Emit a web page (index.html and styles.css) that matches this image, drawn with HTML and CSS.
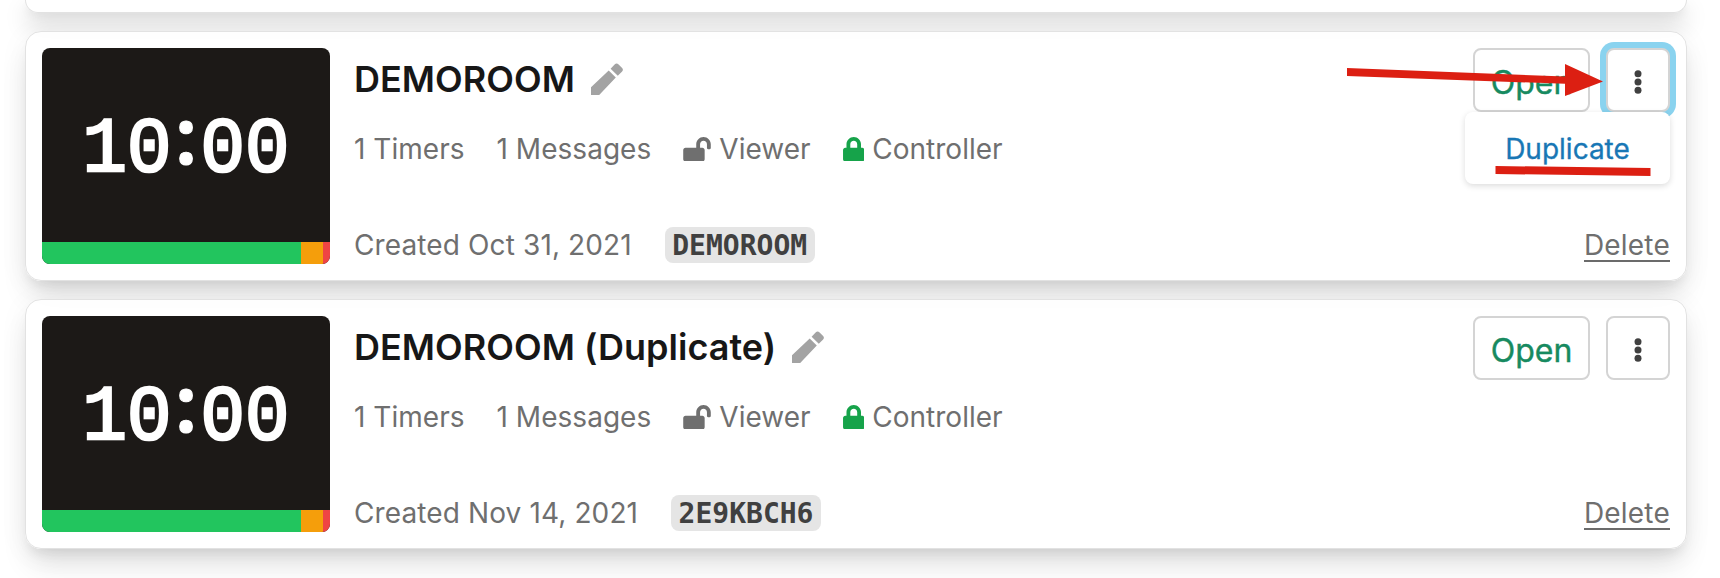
FILE: index.html
```html
<!DOCTYPE html>
<html lang="en">
<head>
<meta charset="utf-8">
<title>Rooms</title>
<link rel="stylesheet" href="styles.css">
</head>
<body>
<svg class="symbols" aria-hidden="true">
  <symbol id="pencil" viewBox="0 0 32 32"><path d="M17.700 7.500l7.100 7.100L8.200 32H0v-7.800zM19.600 5.700l4-4.100q2-2 4 0l3.300 3.200q2 2 0 4l-4.100 4z"/></symbol>
  <symbol id="lock" viewBox="0 0 448 512"><path d="M400 224h-24v-72C376 68.2 307.8 0 224 0S72 68.2 72 152v72H48c-26.5 0-48 21.5-48 48v192c0 26.5 21.5 48 48 48h352c26.5 0 48-21.5 48-48V272c0-26.5-21.5-48-48-48zm-104 0H152v-72c0-39.7 32.3-72 72-72s72 32.3 72 72v72z"/></symbol>
  <symbol id="lock-open" viewBox="0 0 576 512"><path d="M423.5 0C339.5.3 272 69.5 272 153.5V224H48c-26.5 0-48 21.5-48 48v192c0 26.5 21.5 48 48 48h352c26.5 0 48-21.5 48-48V272c0-26.5-21.5-48-48-48h-48v-71.1c0-39.6 31.7-72.5 71.3-72.9 40-.4 72.7 32.1 72.7 72v80c0 13.3 10.7 24 24 24h32c13.3 0 24-10.7 24-24v-80C576 68 507.5-.3 423.5 0z"/></symbol>
  <symbol id="dots" viewBox="0 0 8 24"><circle cx="4" cy="3.7" r="3.5"/><circle cx="4" cy="12" r="3.5"/><circle cx="4" cy="20.3" r="3.5"/></symbol>
</svg>
<main class="rooms">
  <article class="card card-previous"></article>

  <article class="card">
    <div class="preview">
      <div class="time">10<span class="colon">:</span>00</div>
      <div class="progress"><i class="green"></i><i class="orange"></i><i class="red"></i></div>
    </div>
    <div class="info">
      <h2 class="title">DEMOROOM<svg class="icon-pencil"><use href="#pencil"/></svg></h2>
      <div class="meta">
        <span>1 Timers</span><span>1 Messages</span>
        <span class="access"><svg class="icon-open"><use href="#lock-open"/></svg>Viewer</span>
        <span class="access"><svg class="icon-lock"><use href="#lock"/></svg>Controller</span>
      </div>
      <div class="created"><span>Created Oct 31, 2021</span><code class="code">DEMOROOM</code></div>
    </div>
    <div class="side">
      <div class="actions">
        <button class="btn open">Open</button>
        <button class="btn more focused" aria-label="More"><svg class="icon-dots"><use href="#dots"/></svg></button>
        <div class="menu">Duplicate</div>
      </div>
      <a class="delete">Delete</a>
    </div>
  </article>

  <article class="card">
    <div class="preview">
      <div class="time">10<span class="colon">:</span>00</div>
      <div class="progress"><i class="green"></i><i class="orange"></i><i class="red"></i></div>
    </div>
    <div class="info">
      <h2 class="title">DEMOROOM (Duplicate)<svg class="icon-pencil"><use href="#pencil"/></svg></h2>
      <div class="meta">
        <span>1 Timers</span><span>1 Messages</span>
        <span class="access"><svg class="icon-open"><use href="#lock-open"/></svg>Viewer</span>
        <span class="access"><svg class="icon-lock"><use href="#lock"/></svg>Controller</span>
      </div>
      <div class="created"><span>Created Nov 14, 2021</span><code class="code">2E9KBCH6</code></div>
    </div>
    <div class="side">
      <div class="actions">
        <button class="btn open">Open</button>
        <button class="btn more" aria-label="More"><svg class="icon-dots"><use href="#dots"/></svg></button>
      </div>
      <a class="delete">Delete</a>
    </div>
  </article>
</main>
<svg class="annotations" viewBox="0 0 1720 578" aria-hidden="true">
  <path d="M1347 68l218 8.500v-12.500l38 17.500-38 14.500v-12.200l-218-7.800z"/>
  <path d="M1495.500 166l155 2v8l-155-2z"/>
</svg>
</body>
</html>
```
FILE: styles.css
```css
* { box-sizing: border-box; }
body {
  margin: 0;
  height: 578px;
  overflow: hidden;
  background: #fff;
  font-family: Inter, "Liberation Sans", sans-serif;
  font-size: 28px;
  color: #6f6f6f;
}
.symbols { display: none; }
svg { fill: currentColor; }
.rooms {
  display: flex;
  flex-direction: column;
  gap: 18px;
  padding: 0 33px 0 25px;
}
.card {
  display: flex;
  height: 250px;
  padding: 16px;
  border: 1px solid #e2e2e2;
  border-radius: 16px;
  background: rgba(255, 255, 255, .85);
  box-shadow: 0 20px 30px -6px rgba(0, 0, 0, .12), 0 8px 12px -4px rgba(0, 0, 0, .07), 0 4px 30px rgba(0, 0, 0, .05);
}
.card-previous {
  height: 13px;
  padding: 0;
  border-top: 0;
  border-radius: 0 0 16px 16px;
  box-shadow: 0 12px 24px rgba(0, 0, 0, .2), 0 4px 10px -2px rgba(0, 0, 0, .08);
}
.preview {
  display: flex;
  flex-direction: column;
  width: 288px;
  height: 216px;
  border-radius: 8px;
  overflow: hidden;
  background: #1c1917;
}
.time {
  flex: 1;
  display: flex;
  justify-content: center;
  align-items: center;
  padding-top: 9px;
  font: 400 74px/84px "Liberation Mono", monospace;
  color: #fff;
  -webkit-text-stroke: 2.6px #fff;
  transform: scaleY(1.04);
}
.colon {
  margin: 0 4px;
  padding-bottom: 29px;
  font-family: "Open Sans", sans-serif;
  font-weight: 700;
  -webkit-text-stroke-width: 1px;
}
.progress { display: flex; height: 22px; }
.green { flex: 1; background: #22c55e; }
.orange { width: 22.5px; background: #f59e0b; }
.red { width: 7px; background: #ef4444; }
.info { flex: 1; display: flex; flex-direction: column; padding-left: 24px; }
.title {
  display: flex;
  align-items: center;
  gap: 16px;
  height: 62px;
  margin: 0;
  font-size: 36px;
  font-weight: 600;
  color: #171717;
  letter-spacing: .03px;
}
.icon-pencil { width: 32px; height: 32px; color: #a3a3a3; }
.meta { display: flex; align-items: center; gap: 32px; height: 78px; letter-spacing: .03px; }
.access { display: flex; align-items: center; gap: 8px; }
.icon-open { width: 28px; height: 24.5px; }
.icon-lock { width: 21.5px; height: 24.5px; color: #16a34a; }
.created { display: flex; align-items: center; gap: 33px; height: 38px; margin-top: auto; letter-spacing: .12px; }
.code {
  height: 36px;
  padding: 0 7.5px;
  border-radius: 8px;
  background: #e5e5e5;
  color: #404040;
  font: bold 28px/38px "DejaVu Sans Mono", monospace;
  letter-spacing: 0;
}
.side { display: flex; flex-direction: column; align-items: flex-end; justify-content: space-between; }
.actions { position: relative; display: flex; gap: 16px; }
.btn {
  display: flex;
  align-items: center;
  justify-content: center;
  height: 64px;
  padding: 4px 0 0;
  border: 2px solid #d4d4d4;
  border-radius: 8px;
  background: #fff;
  font: 400 32px Inter, sans-serif;
  color: #404040;
}
.open { width: 117px; color: #178a60; -webkit-text-stroke: .4px; }
.more { width: 64px; }
.focused { box-shadow: 0 0 0 6px #8ad3ef; }
.icon-dots { width: 8px; height: 24px; }
.menu {
  position: absolute;
  top: 64px;
  right: 0;
  width: 205px;
  height: 72px;
  border-radius: 8px;
  background: #fff;
  box-shadow: 0 2px 6px rgba(0, 0, 0, .14);
  line-height: 75px;
  text-align: center;
  color: #1877b5;
  -webkit-text-stroke: .3px;
}
.delete { height: 36px; margin-bottom: 2px; border-bottom: 2px solid #6b6b6b; line-height: 38px; letter-spacing: .2px; }
.annotations { position: absolute; left: 0; top: 0; width: 1720px; height: 578px; color: #dc1f12; }
```
